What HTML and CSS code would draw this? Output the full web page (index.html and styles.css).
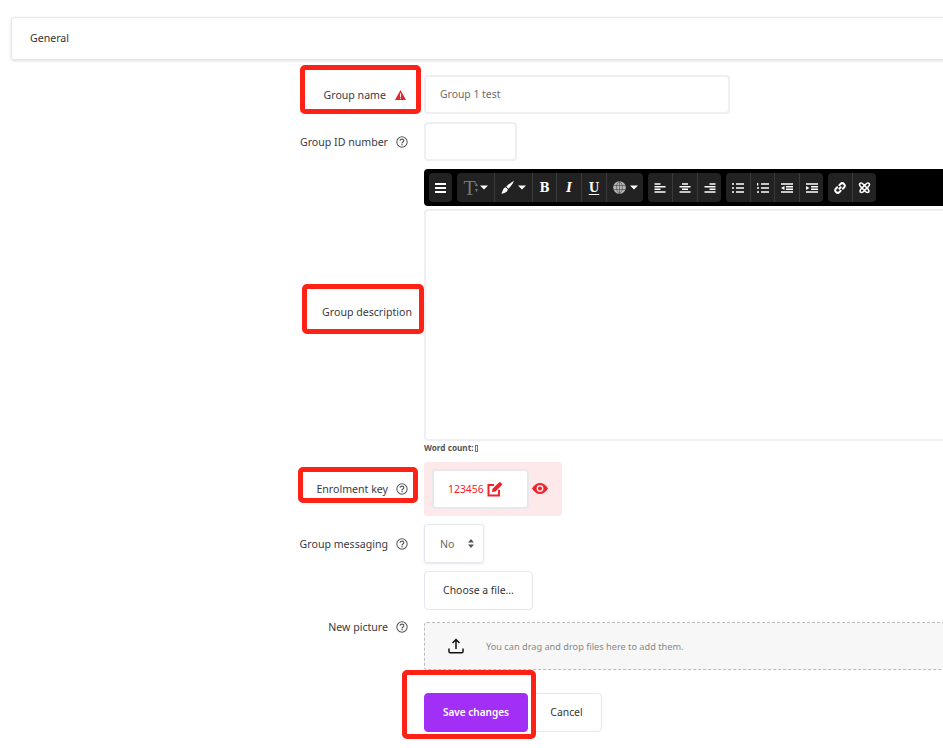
FILE: index.html
```html
<!DOCTYPE html>
<html lang="en">
<head>
<meta charset="utf-8">
<title>General</title>
<link rel="stylesheet" href="styles.css">
</head>
<body>
<svg class="defs" width="0" height="0" aria-hidden="true">
  <symbol id="help" viewBox="0 0 13 13">
    <circle cx="6.5" cy="6.5" r="5.6" fill="none" stroke="currentColor" stroke-width="1.1"/>
    <path d="M4.5 5.2c0-1.2 1-1.8 2-1.8s2 .6 2 1.7c0 1.5-2 1.4-2 2.9" fill="none" stroke="currentColor" stroke-width="1.2"/>
    <circle cx="6.5" cy="9.6" r=".8" fill="currentColor"/>
  </symbol>
  <symbol id="caret" viewBox="0 0 8 5"><path d="M0 .5h8L4 4.5z" fill="currentColor"/></symbol>
</svg>
<main class="page">
  <section class="card">General</section>

  <div class="row row-name">
    <label class="label">Group name<svg class="icon warn" viewBox="0 0 12 11"><path d="M6 0l6 11H0z" fill="#e8202a"/><path d="M5.400 3.600h1.200v4H5.400zM5.400 8.400h1.200v1.200H5.400z" fill="#fff"/></svg></label>
    <div class="field name-field">Group 1 test</div>
  </div>

  <div class="row row-id">
    <label class="label">Group ID number<svg class="icon help"><use href="#help"/></svg></label>
    <div class="field id-field"></div>
  </div>

  <div class="row row-editor">
    <label class="label desc-label">Group description</label>
    <div class="editor">
      <div class="toolbar">
        <div class="group">
          <span class="tool w23"><svg width="11" height="10" viewBox="0 0 11 10"><path d="M0 1h11M0 5h11M0 9h11" stroke="#fff" stroke-width="1.800"/></svg></span>
        </div>
        <div class="group">
          <span class="tool w37 tight"><span class="tfont">T</span><svg class="tarrows" width="3" height="9" viewBox="0 0 3 9"><path d="M1.500 0L3 3H0zM1.500 9L0 6h3z" fill="#777"/></svg><svg class="caret"><use href="#caret"/></svg></span>
          <span class="tool w38"><svg width="13" height="13" viewBox="0 0 13 13"><path d="M12.800.2c.5.5-3.400 6-5.300 7.600L5.300 5.600C7 3.600 12.300-.3 12.800.2zM4.800 6.300l2 2C6.800 11 3 12.800.2 12.500c1.800-1.200 1-5.400 4.600-6.200z" fill="#fff"/></svg><svg class="caret"><use href="#caret"/></svg></span>
          <span class="tool w24 glyph bold">B</span>
          <span class="tool w25 glyph ital">I</span>
          <span class="tool w25 glyph under">U</span>
          <span class="tool w37"><svg width="13" height="13" viewBox="0 0 13 13"><circle cx="6.500" cy="6.500" r="6.300" fill="#b5b5b5"/><path d="M.5 4.500h12M.5 8.500h12M6.500 0v13M6.500 .3c-4 3-4 9.400 0 12.400M6.500 .3c4 3 4 9.400 0 12.400" fill="none" stroke="#444" stroke-width=".6"/></svg><svg class="caret"><use href="#caret"/></svg></span>
        </div>
        <div class="group">
          <span class="tool w24"><svg class="ln" viewBox="0 0 11 10"><path d="M0 1h6M0 3.700h11M0 6.300h6M0 9h11"/></svg></span>
          <span class="tool w25"><svg class="ln" viewBox="0 0 11 10"><path d="M2.500 1h6M0 3.700h11M2.500 6.300h6M0 9h11"/></svg></span>
          <span class="tool w24"><svg class="ln" viewBox="0 0 11 10"><path d="M5 1h6M0 3.700h11M5 6.300h6M0 9h11"/></svg></span>
        </div>
        <div class="group">
          <span class="tool w24"><svg class="ln" viewBox="0 0 12 10"><path d="M4 1h8M4 5h8M4 9h8M0 1h2M0 5h2M0 9h2"/></svg></span>
          <span class="tool w24"><svg class="ln" viewBox="0 0 12 10"><path d="M4 1h8M4 5h8M4 9h8M.5 0v2.500M0 5h2M0 9h2"/></svg></span>
          <span class="tool w25"><svg class="ln" viewBox="0 0 12 10"><path d="M0 1h12M5 3.700h7M5 6.300h7M0 9h12"/><path class="fillw" d="M3.500 3v4L0 5z"/></svg></span>
          <span class="tool w24"><svg class="ln" viewBox="0 0 12 10"><path d="M0 1h12M5 3.700h7M5 6.300h7M0 9h12"/><path class="fillw" d="M0 3v4l3.500-2z"/></svg></span>
        </div>
        <div class="group">
          <span class="tool w24"><svg width="12" height="12" viewBox="0 0 12 12"><path d="M4.700 7.300l2.600-2.600M4.800 3.800L6.500 2c1-1 2.500-1 3.500 0s1 2.500 0 3.500L8.200 7.200M7.200 8.200L5.500 10c-1 1-2.500 1-3.500 0s-1-2.500 0-3.500l1.800-1.700" fill="none" stroke="#fff" stroke-width="1.900"/></svg></span>
          <span class="tool w24"><svg width="13" height="13" viewBox="0 0 13 13"><path d="M3 2c1.500 0 2 1 3.500 2.500L8 6c1.500 1.500 3 2.500 3 4 0 .9-.7 1.500-1.500 1.500-1.500 0-2.500-1.500-4-3L4 7C2.500 5.500 1.500 5 1.500 3.500 1.500 2.700 2.200 2 3 2zM10 2C8.500 2 8 3 6.500 4.500L5 6c-1.500 1.500-3 2.500-3 4 0 .9.700 1.500 1.500 1.500 1.500 0 2.500-1.500 4-3L9 7c1.500-1.500 2.500-2 2.500-3.500C11.500 2.700 10.800 2 10 2z" fill="none" stroke="#fff" stroke-width="1.600"/></svg></span>
        </div>
      </div>
      <div class="editor-area"></div>
      <div class="wordcount">Word count:<span class="tofu"></span></div>
    </div>
  </div>

  <div class="row row-key">
    <label class="label key-label">Enrolment key<svg class="icon help"><use href="#help"/></svg></label>
    <div class="key-panel">
      <div class="key-box">123456<svg class="edit" viewBox="0 0 16 16"><path d="M12 9v5.500H1.500V4H7" fill="none" stroke="#f0222b" stroke-width="2"/><path d="M5.500 7.800L12.800.8l2.700 2.700L8.500 10.600l-3.500.5z" fill="#f0222b"/></svg></div>
      <svg class="eye" viewBox="0 0 16 11"><path d="M0 5.500C2 2 5 0 8 0s6 2 8 5.500C14 9 11 11 8 11S2 9 0 5.500z" fill="#f0222b"/><circle cx="8" cy="5.500" r="3.400" fill="#fde9ea"/><circle cx="8" cy="5.500" r="2" fill="#f0222b"/></svg>
    </div>
  </div>

  <div class="row row-msg">
    <label class="label">Group messaging<svg class="icon help"><use href="#help"/></svg></label>
    <div class="select">No<svg class="updown" viewBox="0 0 6 9"><path d="M3 0l3 3.500H0zM3 9L0 5.500h6z" fill="#555"/></svg></div>
  </div>

  <div class="row row-picture">
    <label class="label picture-label">New picture<svg class="icon help"><use href="#help"/></svg></label>
    <div class="picture">
      <button class="btn choose" type="button">Choose a file...</button>
      <div class="dropzone">
        <svg class="upload" viewBox="0 0 16 16"><path d="M8 11V1.500M4.500 5L8 1.500 11.500 5M1 10.500v3a1.300 1.300 0 0 0 1.300 1.300h11.400a1.300 1.300 0 0 0 1.300-1.300v-3" fill="none" stroke="#111" stroke-width="1.500"/></svg>
        <span>You can drag and drop files here to add them.</span>
      </div>
    </div>
  </div>

  <div class="row row-actions">
    <span></span>
    <div class="actions">
      <button class="btn save" type="button">Save changes</button>
      <button class="btn cancel" type="button">Cancel</button>
    </div>
  </div>
</main>

<div class="mark m-name"></div>
<div class="mark m-desc"></div>
<div class="mark m-key"></div>
<div class="mark m-save"></div>
</body>
</html>
```

FILE: styles.css
```css
* { box-sizing: border-box; }
html, body { margin: 0; height: 748px; overflow: hidden; background: #fff; }
body { font-family: "Noto Sans", "Open Sans", sans-serif; font-size: 10.600px; color: #333; position: relative; }
.defs { position: absolute; }
.page { width: 943px; padding: 17px 0 0 11px; overflow: hidden; height: 748px; }
.card { width: 1000px; height: 43px; line-height: 40px; padding-left: 18px; border: 1px solid #e6e6ef; border-radius: 3px; box-shadow: 0 1px 3px rgba(60, 60, 90, .18); color: #333; }

.row { display: grid; grid-template-columns: 397px 1fr; column-gap: 16px; width: 1000px; }
.label { display: flex; justify-content: flex-end; align-items: center; gap: 8px; width: 397px; padding-top: 2px; color: #373a45; white-space: nowrap; line-height: 15px; }
.row-name { margin-top: 15px; }
.row-id { margin-top: 8px; }
.row-editor { margin-top: 8px; }
.row-key { margin-top: 6px; }
.row-msg { margin-top: 8px; }
.row-picture { margin-top: 8px; }
.row-actions { margin-top: 23px; }

.row-name .label { padding-right: 2px; gap: 9px; }
.desc-label { padding: 0; margin-right: -4px; width: 401px; }
.key-label { padding-top: 1px; }
.picture-label { align-items: flex-start; padding-top: 49px; }
.picture-label .help { margin-top: 1px; }

.icon { flex: none; margin-top: -2px; }
.help { width: 12px; height: 12px; color: #555; }
.warn { width: 11px; height: 10px; }

.field { height: 39px; border: 2px solid #eeeef3; border-radius: 4px; background: #fff; }
.name-field { width: 306px; padding-left: 14px; line-height: 34px; font-size: 10.400px; color: #6b6b6b; }
.id-field { width: 93px; }

.editor { width: 530px; }
.toolbar { display: flex; align-items: center; gap: 5px; height: 37px; padding-left: 5px; background: #000; border-radius: 4px 0 0 4px; }
.group { display: flex; height: 29px; background: #222; border-radius: 4px; overflow: hidden; }
.tool { display: flex; align-items: center; justify-content: center; gap: 4px; height: 29px; border-left: 1px solid #3a3a3a; color: #fff; }
.tool:first-child { border-left: 0; }
.tight { gap: 2px; }
.w23 { width: 23px; }
.w24 { width: 24px; }
.w25 { width: 25px; }
.w37 { width: 37px; }
.w38 { width: 38px; }
.caret { width: 8px; height: 5px; color: #fff; }
.tfont { font-family: "Liberation Serif", serif; font-size: 20px; color: #777; line-height: 20px; }
.tarrows { margin-left: -3px; }
.glyph { font-family: "DejaVu Serif", serif; font-size: 12px; font-weight: 700; }
.ital { font-style: italic; }
.under { text-decoration: underline; text-underline-offset: 2px; }
.ln { width: 12px; height: 10px; fill: none; stroke: #fff; stroke-width: 1.600; }
.fillw { fill: #fff; stroke: none; }

.editor-area { height: 232px; margin-top: 3px; border: 2px solid #eeeef3; border-right: 0; border-radius: 4px 0 0 4px; }
.wordcount { height: 15px; padding-top: 1px; font-size: 8.200px; font-weight: 700; line-height: 12px; color: #555; }
.tofu { display: inline-block; width: 3px; height: 7px; margin-left: 1px; border: 1px solid #777; vertical-align: -1px; }

.key-panel { display: flex; align-items: center; gap: 3px; width: 138px; height: 54px; padding: 0 8px; background: #fde9ea; border-radius: 3px; }
.key-box { display: flex; align-items: center; gap: 3px; width: 97px; height: 40px; flex: none; padding-left: 14px; background: #fff; border: 2px solid #e8e8ec; border-radius: 4px; font-size: 10.400px; color: #f0222b; }
.edit { width: 16px; height: 16px; margin-top: -1px; }
.eye { width: 16px; height: 11px; margin-top: -2px; }

.select { display: flex; align-items: center; justify-content: space-between; width: 60px; height: 39px; padding: 0 9px 0 15px; border: 1px solid #e6e6ef; border-radius: 3px; box-shadow: 0 1px 2px rgba(60, 60, 90, .12); color: #666; }
.updown { width: 6px; height: 9px; }

.btn { font: inherit; font-size: 10.400px; height: 39px; border-radius: 4px; background: #fff; border: 1px solid #e6e6ef; color: #333; padding: 0 0 2px; }
.choose { display: block; width: 109px; }
.dropzone { display: flex; align-items: center; gap: 22px; width: 600px; height: 48px; margin-top: 12px; padding-left: 23px; background: #f7f7f7; border: 1px dashed #bbb; border-radius: 3px; font-size: 9.200px; color: #888; }
.upload { width: 16px; height: 16px; }

.actions { display: flex; gap: 3px; }
.save { width: 104px; background: #a22ff6; border-color: #a22ff6; color: #fff; font-size: 10px; font-weight: 600; }
.cancel { width: 71px; }

.mark { position: absolute; border: 5px solid #ff2116; border-radius: 5px; }
.m-name { left: 300px; top: 65px; width: 121px; height: 49px; }
.m-desc { left: 302px; top: 284px; width: 122px; height: 50px; }
.m-key { left: 298px; top: 467px; width: 120px; height: 36px; }
.m-save { left: 402px; top: 670px; width: 134px; height: 69px; }
```
